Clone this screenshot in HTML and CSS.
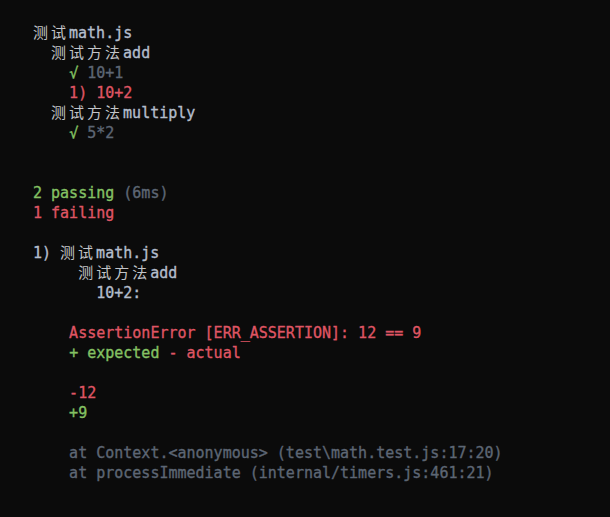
FILE: index.html
```html
<!DOCTYPE html>
<html lang="zh">
<head>
<meta charset="utf-8">
<link rel="stylesheet" href="styles.css">
</head>
<body>
<div class="term">
<div class="line"><span class="cjk">测试</span>math.js</div>
<div class="line">  <span class="cjk">测试方法</span>add</div>
<div class="line">    <span class="green">√</span> <span class="dim">10+1</span></div>
<div class="line red">    1) 10+2</div>
<div class="line">  <span class="cjk">测试方法</span>multiply</div>
<div class="line">    <span class="green">√</span> <span class="dim">5*2</span></div>
<div class="line"> </div>
<div class="line"> </div>
<div class="line"><span class="green">2 passing</span> <span class="dim">(6ms)</span></div>
<div class="line red">1 failing</div>
<div class="line"> </div>
<div class="line">1) <span class="cjk">测试</span>math.js</div>
<div class="line">     <span class="cjk">测试方法</span>add</div>
<div class="line">       10+2:</div>
<div class="line"> </div>
<div class="line red">    AssertionError [ERR_ASSERTION]: 12 == 9</div>
<div class="line">    <span class="green">+ expected</span> <span class="red">- actual</span></div>
<div class="line"> </div>
<div class="line red">    -12</div>
<div class="line green">    +9</div>
<div class="line"> </div>
<div class="line dim">    at Context.&lt;anonymous&gt; (test\math.test.js:17:20)</div>
<div class="line dim">    at processImmediate (internal/timers.js:461:21)</div>
</div>
</body>
</html>
```
FILE: styles.css
```css
html, body {
  margin: 0;
  padding: 0;
  background: #0b0b0b;
  height: 100%;
}
.term {
  padding: 23px 0 0 33px;
  font-family: "DejaVu Sans Mono", "Noto Sans CJK SC", monospace;
  font-size: 15px;
  line-height: 20px;
  color: #b3bdcc;
  -webkit-text-stroke: 0.35px currentColor;
}
.line {
  white-space: pre;
  height: 20px;
}
.cjk {
  font-family: "Noto Sans CJK SC", sans-serif;
  font-size: 15px;
  line-height: 15px;
  letter-spacing: 3px;
  color: #c2c4c8;
  -webkit-text-stroke: 0;
}
.green { color: #84c163; }
.red { color: #df5563; }
.dim { color: #5d6674; }
```
